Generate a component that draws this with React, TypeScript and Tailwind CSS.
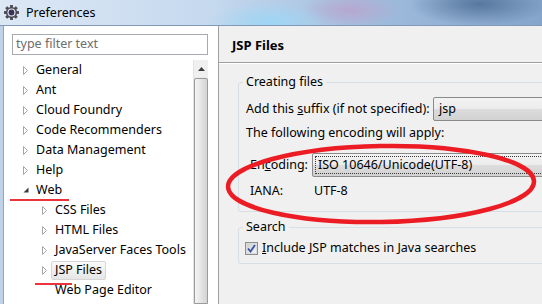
import React from 'react';

type Node = { label: string; depth: 0 | 1; state: 'closed' | 'open' | 'leaf'; selected?: boolean };

// preference tree, as shown in the left pane
const TREE: Node[] = [
  { label: 'General', depth: 0, state: 'closed' },
  { label: 'Ant', depth: 0, state: 'closed' },
  { label: 'Cloud Foundry', depth: 0, state: 'closed' },
  { label: 'Code Recommenders', depth: 0, state: 'closed' },
  { label: 'Data Management', depth: 0, state: 'closed' },
  { label: 'Help', depth: 0, state: 'closed' },
  { label: 'Web', depth: 0, state: 'open' },
  { label: 'CSS Files', depth: 1, state: 'closed' },
  { label: 'HTML Files', depth: 1, state: 'closed' },
  { label: 'JavaServer Faces Tools', depth: 1, state: 'closed' },
  { label: 'JSP Files', depth: 1, state: 'closed', selected: true },
  { label: 'Web Page Editor', depth: 1, state: 'leaf' },
];

const GearIcon = () => (
  <svg width="15" height="15" viewBox="0 0 16 16" className="ml-[4px] shrink-0">
    <g fill="#4b4b55">
      {[0, 45, 90, 135, 180, 225, 270, 315].map((a) => (
        <rect key={a} x="6.5" y="0" width="3" height="4" transform={`rotate(${a} 8 8)`} />
      ))}
      <circle cx="8" cy="8" r="6" />
    </g>
    <circle cx="8" cy="8" r="4.3" fill="#e8e8ee" />
    <circle cx="8" cy="8" r="3.1" fill="#3a3358" />
  </svg>
);

const Expander = ({ state }: { state: Node['state'] }) => {
  if (state === 'leaf') return <span className="w-[10px] shrink-0" />;
  if (state === 'open')
    return (
      <svg width="10" height="20" viewBox="0 0 10 20" className="shrink-0">
        <path d="M6.5 7.5 L6.5 12.5 L1.5 12.5 Z" fill="#3c3c3c" />
      </svg>
    );
  return (
    <svg width="10" height="20" viewBox="0 0 10 20" className="shrink-0">
      <path d="M1.5 6.5 L5.5 10.5 L1.5 14.5 Z" fill="#fff" stroke="#a6a6a6" strokeWidth="1" />
    </svg>
  );
};

const Scrollbar = () => (
  <div className="w-[15px] shrink-0 h-full flex flex-col bg-[#eaeaea] border-l border-[#e3e3e3]">
    <div className="h-[17px] flex items-center justify-center bg-[#f0f0f0]">
      <svg width="7" height="4" viewBox="0 0 7 4">
        <path d="M0 4 L3.5 0 L7 4 Z" fill="#3d3d3d" />
      </svg>
    </div>
    <div className="mt-[1px] flex-1 rounded-t-[2px] border border-[#9b9b9b] bg-[linear-gradient(to_right,#f4f4f4,#e6e6e6_45%,#d3d3d3)]" />
  </div>
);

const Combo = ({ text, focused }: { text: string; focused?: boolean }) => (
  <div className="h-[24px] w-[260px] shrink-0 rounded-[2px] border border-[#8a8a8a] bg-[linear-gradient(to_bottom,#f3f3f3,#ececec_48%,#dcdcdc_52%,#d2d2d2)] p-[2px]">
    <div
      className={`h-full flex items-center pl-[2px] ${
        focused ? 'border border-dotted border-[#3a3a3a]' : 'border border-transparent'
      }`}
    >
      {text}
    </div>
  </div>
);

const CheckBox = () => (
  <div className="w-[13px] h-[13px] shrink-0 border border-[#8f8f8f] bg-[#dcdcdc] p-[1px]">
    <div className="w-full h-full bg-[linear-gradient(to_bottom_right,#cfcfcf,#f4f4f4)] flex items-center justify-center">
      <svg width="9" height="9" viewBox="0 0 9 9">
        <path d="M1 4.5 L3.5 7.5 L8 1" fill="none" stroke="#3752a6" strokeWidth="1.8" />
      </svg>
    </div>
  </div>
);

export default function App() {
  return (
    <div className="relative w-[542px] h-[304px] overflow-hidden bg-[#f0f0f0] font-['Noto_Sans','Noto_Sans_CJK_SC',sans-serif] text-[12.5px] text-black">
      {/* title bar */}
      <div className="h-[26px] flex items-center border-b border-[#8099b6] bg-[radial-gradient(ellipse_60px_20px_at_270px_22px,#9ed6f5,transparent),radial-gradient(ellipse_50px_18px_at_350px_10px,#b7a7cf,transparent),radial-gradient(ellipse_70px_22px_at_480px_4px,#58779e,transparent),linear-gradient(to_right,#dde8f5,#c4d8ee_40%,#9ebbdc_70%,#86a5cb)]">
        <GearIcon />
        <span className="ml-[7px] leading-[16px]">Preferences</span>
      </div>

      <div className="flex h-[278px]">
        {/* window frame edge */}
        <div className="w-[4px] shrink-0 bg-[#bfd2e8] border-r border-[#8fa4bd]" />

        {/* left pane: filter + tree */}
        <div className="w-[215px] shrink-0 bg-white border-r border-[#a0a0a0] pt-[8px] pl-[8px] flex flex-col">
          <div className="w-[196px] h-[21px] border border-[#a7abb0] flex items-center pl-[3px] text-[#6d6d6d]">
            type filter text
          </div>
          <div className="mt-[5px] flex flex-1 min-h-0">
            <div className="w-[181px] shrink-0">
              {TREE.map((n) => (
                <div
                  key={n.label}
                  className={`h-[20px] flex items-center ${n.depth === 0 ? 'pl-[10px]' : 'pl-[29px]'}`}
                >
                  <Expander state={n.state} />
                  <span
                    className={`h-[19px] px-[3px] flex items-center whitespace-nowrap rounded-[2px] border ${
                      n.selected
                        ? 'border-[#d6d6d6] bg-[linear-gradient(to_bottom,#fafafa,#e6e6e6)]'
                        : 'border-transparent'
                    }`}
                  >
                    {n.label}
                  </span>
                </div>
              ))}
            </div>
            <Scrollbar />
          </div>
        </div>

        {/* right pane: page */}
        <div className="flex-1 min-w-0 flex flex-col">
          <div className="h-[37px] pt-[4px] pl-[13px] flex items-center text-[13px] font-bold border-b border-[#a0a0a0]">
            JSP Files
          </div>
          <div className="border-t border-white pl-[19px]">
            <fieldset className="mt-[10px] w-[330px] rounded-[3px] border border-[#d5dfe5] px-[4px] pb-[10px]">
              <legend className="px-[3px] leading-[16px]">Creating files</legend>
              <div className="mt-[7px] h-[24px] flex items-center">
                <span className="w-[190px] shrink-0 pl-[3px] whitespace-nowrap">
                  Add this <span className="underline">s</span>uffix (if not specified):
                </span>
                <Combo text="jsp" />
              </div>
              <div className="mt-[3px] leading-[18px] pl-[3px]">The following encoding will apply:</div>
              <div className="mt-[11px] h-[24px] flex items-center">
                <span className="w-[69px] shrink-0 pl-[7px]">
                  En<span className="underline">c</span>oding:
                </span>
                <Combo text="ISO 10646/Unicode(UTF-8)" focused />
              </div>
              <div className="mt-[4px] h-[20px] flex items-center">
                <span className="w-[71px] shrink-0 pl-[7px]">IANA:</span>
                <span>UTF-8</span>
              </div>
            </fieldset>

            <fieldset className="mt-[7px] w-[330px] rounded-[3px] border border-[#d5dfe5] px-[4px] pb-[7px]">
              <legend className="px-[3px] leading-[16px]">Search</legend>
              <div className="mt-[5px] h-[16px] flex items-center pl-[2px] gap-[4px]">
                <CheckBox />
                <span>
                  <span className="underline">I</span>nclude JSP matches in Java searches
                </span>
              </div>
            </fieldset>
          </div>
        </div>
      </div>

      {/* red hand-drawn annotations */}
      <svg className="absolute inset-0 pointer-events-none" width="542" height="304">
        <ellipse
          cx="381"
          cy="184"
          rx="153"
          ry="38"
          transform="rotate(-1 381 184)"
          fill="none"
          stroke="#ec1c24"
          strokeWidth="4.5"
        />
      </svg>
      <div className="absolute left-[10px] top-[199px] w-[59px] h-[2px] bg-[#e8343a]" />
      <div className="absolute left-[35px] top-[283px] w-[37px] h-[2px] bg-[#e8343a]" />
    </div>
  );
}
